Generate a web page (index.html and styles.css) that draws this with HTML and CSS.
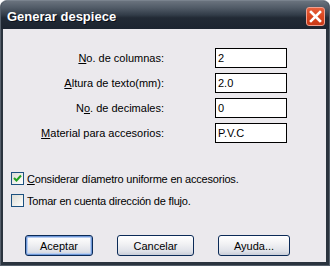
FILE: index.html
```html
<!DOCTYPE html>
<html lang="es">
<head>
    <meta charset="UTF-8">
    <title>Generar despiece</title>
    <link rel="stylesheet" href="styles.css">
</head>
<body>
    <div class="window">
        <div class="titlebar">
            <span class="title">Generar despiece</span>
            <span class="close-btn">
                <svg width="19" height="19" viewBox="0 0 19 19">
                    <path d="M5 5 L14 14 M14 5 L5 14" stroke="#ffffff" stroke-width="2.6" stroke-linecap="square"/>
                </svg>
            </span>
        </div>

        <div class="client">
            <!-- campos -->
            <div class="form-grid">
                <label class="field-label"><u>N</u>o. de columnas:</label>
                <div class="field-input">2</div>

                <label class="field-label"><u>A</u>ltura de texto(mm):</label>
                <div class="field-input">2.0</div>

                <label class="field-label">N<u>o</u>. de decimales:</label>
                <div class="field-input">0</div>

                <label class="field-label"><u>M</u>aterial para accesorios:</label>
                <div class="field-input">P.V.C</div>
            </div>

            <!-- opciones -->
            <div class="options">
                <div class="check-row">
                    <span class="checkbox checked">
                        <svg width="11" height="11" viewBox="0 0 11 11">
                            <path d="M2 5 L4.5 7.5 L9 2.5" fill="none" stroke="#21a121" stroke-width="2"/>
                        </svg>
                    </span>
                    <span class="check-text"><u>C</u>onsiderar díametro uniforme en accesorios.</span>
                </div>
                <div class="check-row">
                    <span class="checkbox"></span>
                    <span class="check-text">Tomar en cuenta dirección de flujo.</span>
                </div>
            </div>

            <!-- botones -->
            <div class="buttons">
                <button class="btn btn-default btn-ok">Aceptar</button>
                <button class="btn btn-cancel">Cancelar</button>
                <button class="btn btn-help">Ayuda...</button>
            </div>
        </div>
    </div>
</body>
</html>
```

FILE: styles.css
```css
body {
    margin: 0;
    background: #ffffff;
    font-family: 'Liberation Sans', Arial, sans-serif;
    font-size: 11px;
    color: #000000;
}
.window {
    width: 330px;
    height: 266px;
    box-sizing: border-box;
    background: #2a333e;
    border-radius: 7px 7px 0 0;
    border: 1px solid #56606c;
    border-top-color: #7a838e;
    display: flex;
    flex-direction: column;
    overflow: hidden;
}
.titlebar {
    height: 28px;
    flex: none;
    display: flex;
    align-items: center;
    justify-content: space-between;
    padding: 0 4px 0 6px;
    background: linear-gradient(to bottom, #6a737e 0%, #505a66 25%, #323c48 50%, #222a35 60%, #1c2430 100%);
}
.title {
    color: #ffffff;
    font-family: 'Liberation Sans', Arial, sans-serif;
    font-weight: bold;
    font-size: 13px;
    text-shadow: 1px 1px 0 #0a0f1a;
    margin-top: 2px;
}
.close-btn {
    width: 19px;
    height: 19px;
    margin-top: 2px;
    box-sizing: border-box;
    border: 1px solid #f0a090;
    border-radius: 3px;
    background: linear-gradient(to bottom, #e8603c 0%, #d9461f 50%, #c83a18 100%);
    display: flex;
    align-items: center;
    justify-content: center;
}
.close-btn svg {
    margin: -1px;
}
.client {
    flex: 1;
    margin: 0 3px 3px 2px;
    background: #ebe9ed;
    display: flex;
    flex-direction: column;
}
.form-grid {
    display: grid;
    grid-template-columns: 161px 72px;
    column-gap: 51px;
    row-gap: 5px;
    padding-top: 19px;
    align-items: center;
}
.field-label {
    text-align: right;
}
.field-input {
    height: 20px;
    box-sizing: border-box;
    border: 1px solid #000000;
    background: #ffffff;
    padding: 0 2px;
    line-height: 18px;
}
.options {
    margin-top: 29px;
    padding-left: 8px;
    display: flex;
    flex-direction: column;
    gap: 9px;
}
.check-row {
    display: flex;
    align-items: center;
    height: 13px;
}
.checkbox {
    width: 13px;
    height: 13px;
    box-sizing: border-box;
    border: 1px solid #1c5180;
    background: linear-gradient(135deg, #dcdcd6 0%, #f4f4f0 70%, #ffffff 100%);
    display: flex;
    align-items: center;
    justify-content: center;
    margin-right: 3px;
}
.check-text {
    letter-spacing: -0.2px;
}
.buttons {
    margin-top: 28px;
    display: flex;
    padding-left: 22px;
}
.btn {
    height: 21px;
    box-sizing: border-box;
    border: 1px solid #0b2a57;
    border-radius: 3px;
    background: linear-gradient(to bottom, #ffffff 0%, #f2f2f4 40%, #dfe1e8 80%, #c9cdd8 100%);
    font-family: 'Liberation Sans', Arial, sans-serif;
    font-size: 11px;
    color: #000000;
    padding: 0;
}
.btn-default {
    box-shadow: inset 0 0 0 1px #6f98d8, inset 0 0 0 2px #b8cdf0;
}
.btn-ok {
    width: 68px;
}
.btn-cancel {
    width: 77px;
    margin-left: 24px;
}
.btn-help {
    width: 72px;
    margin-left: 24px;
}
```
